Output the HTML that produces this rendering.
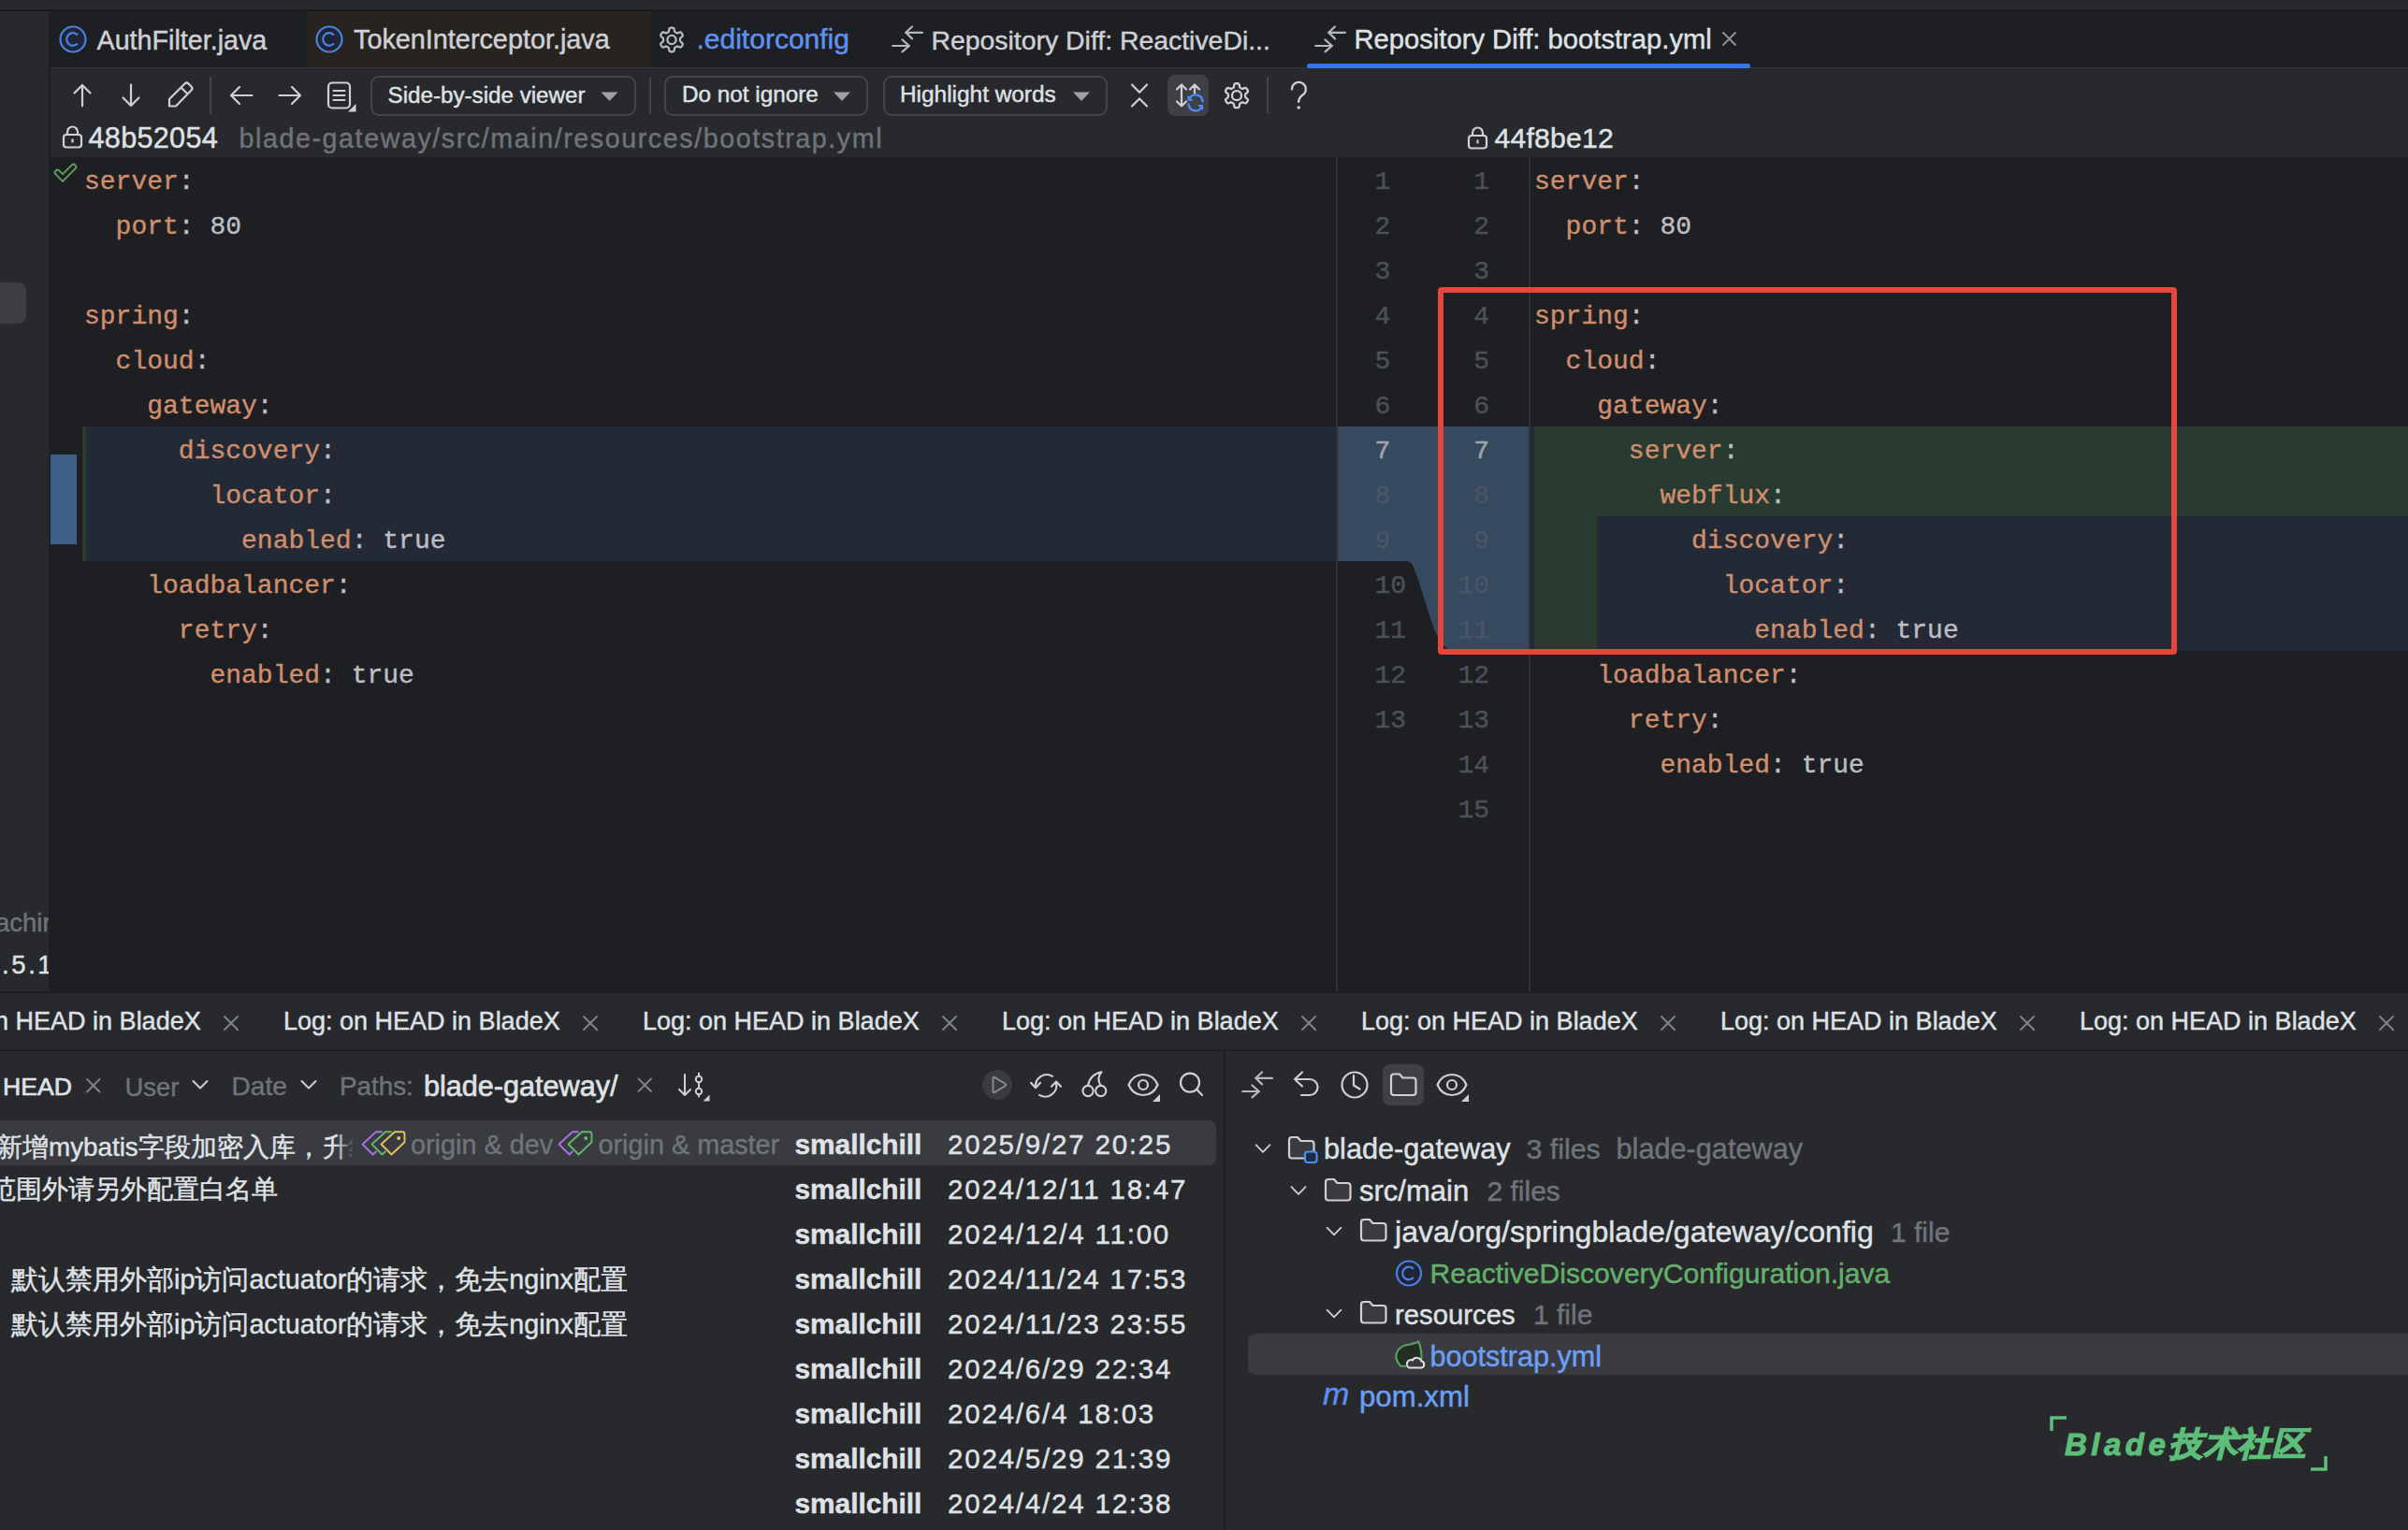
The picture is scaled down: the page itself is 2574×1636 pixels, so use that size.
<!DOCTYPE html><html><head><meta charset="utf-8"><title>diff</title><style>

:root{--s:"Liberation Sans",sans-serif;--m:"Liberation Mono",monospace;}
html,body{margin:0;padding:0;}
body{width:2574px;height:1636px;overflow:hidden;position:relative;background:#1e1f22;}
.bg div, .ov div{position:absolute;box-sizing:border-box;}
.t{position:absolute;white-space:pre;line-height:1;-webkit-text-stroke:0.45px currentColor;}
.t span{-webkit-text-stroke:0.4px currentColor;}
svg{position:absolute;left:0;top:0;}

</style></head><body>
<div class="bg"><div style="left:0px;top:0px;width:2574px;height:10px;background:#28292c;"></div><div style="left:0px;top:10px;width:2574px;height:2px;background:#1a1b1e;"></div><div style="left:0px;top:12px;width:52px;height:1048px;background:#28292c;"></div><div style="left:-8px;top:302px;width:36px;height:44px;background:#3c3e44;border-radius:8px;"></div><div style="left:52px;top:12px;width:2522px;height:60px;background:#1e1f22;"></div><div style="left:328px;top:12px;width:368px;height:60px;background:#27231e;"></div><div style="left:54px;top:72px;width:2520px;height:1px;background:#35373b;"></div><div style="left:54px;top:73px;width:2520px;height:95px;background:#28292c;"></div><div style="left:1397px;top:68px;width:474px;height:5px;background:#3574f0;border-radius:3px;"></div><div style="left:1428px;top:168px;width:2px;height:893px;background:#2f3136;"></div><div style="left:1634px;top:168px;width:2px;height:893px;background:#2f3136;"></div><div style="left:88px;top:456px;width:4px;height:144px;background:#2a3b2f;"></div><div style="left:92px;top:456px;width:1336px;height:144px;background:#232935;"></div><div style="left:54px;top:486px;width:28px;height:96px;background:#3f5f86;"></div><div style="left:1636px;top:456px;width:4px;height:240px;background:#232935;"></div><div style="left:1640px;top:456px;width:934px;height:96px;background:#293a30;"></div><div style="left:1640px;top:552px;width:67px;height:144px;background:#293a30;"></div><div style="left:1707px;top:552px;width:867px;height:144px;background:#232935;"></div><div style="left:0px;top:1062px;width:2574px;height:574px;background:#28292c;"></div><div style="left:0px;top:1061px;width:2574px;height:1px;background:#1a1b1e;"></div><div style="left:0px;top:1122px;width:2574px;height:2px;background:#1e1f22;"></div><div style="left:1308px;top:1124px;width:2px;height:512px;background:#1e1f22;"></div><div style="left:-10px;top:1198px;width:1310px;height:48px;background:#393b40;border-radius:8px;"></div><div style="left:1334px;top:1426px;width:1300px;height:44px;background:#393b40;border-radius:8px;"></div><div style="left:224px;top:82px;width:2px;height:40px;background:#43454a;"></div><div style="left:694px;top:83px;width:2px;height:39px;background:#43454a;"></div><div style="left:1354px;top:82px;width:2px;height:39px;background:#43454a;"></div><div style="left:396px;top:80.5px;width:284px;height:43px;border:2px solid #43454a;border-radius:9px;"></div><div style="left:710px;top:80.5px;width:218px;height:43px;border:2px solid #43454a;border-radius:9px;"></div><div style="left:944px;top:80.5px;width:240px;height:43px;border:2px solid #43454a;border-radius:9px;"></div><div style="left:1248px;top:80px;width:44px;height:44px;background:#3e4045;border-radius:8px;"></div><div style="left:1478px;top:1138px;width:44px;height:44px;background:#3e4045;border-radius:8px;"></div></div>
<svg width="2574" height="1636" viewBox="0 0 2574 1636"><path d="M1430 456 H1634 V696 H1552 C1532 690 1525 640 1510 604 C1508 601 1506 600 1502 600 H1430 Z" fill="#35495f"/></svg>
<div class="t" style="left:103.5px;top:28.50px;font-size:28.7px;color:#ced0d6;font-family:var(--s);">AuthFilter.java</div><div class="t" style="left:378.0px;top:28.42px;font-size:28.8px;color:#ced0d6;font-family:var(--s);">TokenInterceptor.java</div><div class="t" style="left:744.5px;top:27.40px;font-size:30.0px;color:#5e92f2;font-family:var(--s);">.editorconfig</div><div class="t" style="left:995.5px;top:28.75px;font-size:28.4px;color:#ced0d6;font-family:var(--s);">Repository Diff: ReactiveDi...</div><div class="t" style="left:1447.5px;top:28.08px;font-size:29.2px;color:#dfe1e5;font-family:var(--s);">Repository Diff: bootstrap.yml</div><div class="t" style="left:414.5px;top:89.51px;font-size:24.2px;color:#dfe1e5;font-family:var(--s);">Side-by-side viewer</div><div class="t" style="left:729.0px;top:89.43px;font-size:24.3px;color:#dfe1e5;font-family:var(--s);">Do not ignore</div><div class="t" style="left:962.0px;top:89.34px;font-size:24.4px;color:#dfe1e5;font-family:var(--s);">Highlight words</div><div class="t" style="left:94.5px;top:131.89px;font-size:30.6px;color:#dfe1e5;font-family:var(--s);letter-spacing:0.3px;">48b52054</div><div class="t" style="left:255.5px;top:133.78px;font-size:28.6px;color:#6f737a;font-family:var(--s);letter-spacing:1.6px;">blade-gateway/src/main/resources/bootstrap.yml</div><div class="t" style="left:1597.5px;top:132.93px;font-size:30.2px;color:#dfe1e5;font-family:var(--s);letter-spacing:0.2px;">44f8be12</div><div class="t" style="left:90.0px;top:180.55px;font-size:28px;font-family:var(--m);"><span style="color:#bcbec4"></span><span style="color:#cf8e6d">server</span><span style="color:#bcbec4">:</span></div><div class="t" style="left:90.0px;top:228.55px;font-size:28px;font-family:var(--m);"><span style="color:#bcbec4">  </span><span style="color:#cf8e6d">port</span><span style="color:#bcbec4">:</span><span style="color:#bcbec4"> 80</span></div><div class="t" style="left:90.0px;top:324.55px;font-size:28px;font-family:var(--m);"><span style="color:#bcbec4"></span><span style="color:#cf8e6d">spring</span><span style="color:#bcbec4">:</span></div><div class="t" style="left:90.0px;top:372.55px;font-size:28px;font-family:var(--m);"><span style="color:#bcbec4">  </span><span style="color:#cf8e6d">cloud</span><span style="color:#bcbec4">:</span></div><div class="t" style="left:90.0px;top:420.55px;font-size:28px;font-family:var(--m);"><span style="color:#bcbec4">    </span><span style="color:#cf8e6d">gateway</span><span style="color:#bcbec4">:</span></div><div class="t" style="left:90.0px;top:468.55px;font-size:28px;font-family:var(--m);"><span style="color:#bcbec4">      </span><span style="color:#cf8e6d">discovery</span><span style="color:#bcbec4">:</span></div><div class="t" style="left:90.0px;top:516.55px;font-size:28px;font-family:var(--m);"><span style="color:#bcbec4">        </span><span style="color:#cf8e6d">locator</span><span style="color:#bcbec4">:</span></div><div class="t" style="left:90.0px;top:564.55px;font-size:28px;font-family:var(--m);"><span style="color:#bcbec4">          </span><span style="color:#cf8e6d">enabled</span><span style="color:#bcbec4">:</span><span style="color:#bcbec4"> true</span></div><div class="t" style="left:90.0px;top:612.55px;font-size:28px;font-family:var(--m);"><span style="color:#bcbec4">    </span><span style="color:#cf8e6d">loadbalancer</span><span style="color:#bcbec4">:</span></div><div class="t" style="left:90.0px;top:660.55px;font-size:28px;font-family:var(--m);"><span style="color:#bcbec4">      </span><span style="color:#cf8e6d">retry</span><span style="color:#bcbec4">:</span></div><div class="t" style="left:90.0px;top:708.55px;font-size:28px;font-family:var(--m);"><span style="color:#bcbec4">        </span><span style="color:#cf8e6d">enabled</span><span style="color:#bcbec4">:</span><span style="color:#bcbec4"> true</span></div><div class="t" style="left:1640.0px;top:180.55px;font-size:28px;font-family:var(--m);"><span style="color:#bcbec4"></span><span style="color:#cf8e6d">server</span><span style="color:#bcbec4">:</span></div><div class="t" style="left:1640.0px;top:228.55px;font-size:28px;font-family:var(--m);"><span style="color:#bcbec4">  </span><span style="color:#cf8e6d">port</span><span style="color:#bcbec4">:</span><span style="color:#bcbec4"> 80</span></div><div class="t" style="left:1640.0px;top:324.55px;font-size:28px;font-family:var(--m);"><span style="color:#bcbec4"></span><span style="color:#cf8e6d">spring</span><span style="color:#bcbec4">:</span></div><div class="t" style="left:1640.0px;top:372.55px;font-size:28px;font-family:var(--m);"><span style="color:#bcbec4">  </span><span style="color:#cf8e6d">cloud</span><span style="color:#bcbec4">:</span></div><div class="t" style="left:1640.0px;top:420.55px;font-size:28px;font-family:var(--m);"><span style="color:#bcbec4">    </span><span style="color:#cf8e6d">gateway</span><span style="color:#bcbec4">:</span></div><div class="t" style="left:1640.0px;top:468.55px;font-size:28px;font-family:var(--m);"><span style="color:#bcbec4">      </span><span style="color:#cf8e6d">server</span><span style="color:#bcbec4">:</span></div><div class="t" style="left:1640.0px;top:516.55px;font-size:28px;font-family:var(--m);"><span style="color:#bcbec4">        </span><span style="color:#cf8e6d">webflux</span><span style="color:#bcbec4">:</span></div><div class="t" style="left:1640.0px;top:564.55px;font-size:28px;font-family:var(--m);"><span style="color:#bcbec4">          </span><span style="color:#cf8e6d">discovery</span><span style="color:#bcbec4">:</span></div><div class="t" style="left:1640.0px;top:612.55px;font-size:28px;font-family:var(--m);"><span style="color:#bcbec4">            </span><span style="color:#cf8e6d">locator</span><span style="color:#bcbec4">:</span></div><div class="t" style="left:1640.0px;top:660.55px;font-size:28px;font-family:var(--m);"><span style="color:#bcbec4">              </span><span style="color:#cf8e6d">enabled</span><span style="color:#bcbec4">:</span><span style="color:#bcbec4"> true</span></div><div class="t" style="left:1640.0px;top:708.55px;font-size:28px;font-family:var(--m);"><span style="color:#bcbec4">    </span><span style="color:#cf8e6d">loadbalancer</span><span style="color:#bcbec4">:</span></div><div class="t" style="left:1640.0px;top:756.55px;font-size:28px;font-family:var(--m);"><span style="color:#bcbec4">      </span><span style="color:#cf8e6d">retry</span><span style="color:#bcbec4">:</span></div><div class="t" style="left:1640.0px;top:804.55px;font-size:28px;font-family:var(--m);"><span style="color:#bcbec4">        </span><span style="color:#cf8e6d">enabled</span><span style="color:#bcbec4">:</span><span style="color:#bcbec4"> true</span></div><div class="t" style="left:1469.5px;top:180.55px;font-size:28px;color:#4b5059;font-family:var(--m);">1</div><div class="t" style="left:1469.5px;top:228.55px;font-size:28px;color:#4b5059;font-family:var(--m);">2</div><div class="t" style="left:1469.5px;top:276.55px;font-size:28px;color:#4b5059;font-family:var(--m);">3</div><div class="t" style="left:1469.5px;top:324.55px;font-size:28px;color:#4b5059;font-family:var(--m);">4</div><div class="t" style="left:1469.5px;top:372.55px;font-size:28px;color:#4b5059;font-family:var(--m);">5</div><div class="t" style="left:1469.5px;top:420.55px;font-size:28px;color:#4b5059;font-family:var(--m);">6</div><div class="t" style="left:1469.5px;top:468.55px;font-size:28px;color:#a1a3ab;font-family:var(--m);">7</div><div class="t" style="left:1469.5px;top:516.55px;font-size:28px;color:#4a5566;font-family:var(--m);">8</div><div class="t" style="left:1469.5px;top:564.55px;font-size:28px;color:#4a5566;font-family:var(--m);">9</div><div class="t" style="left:1469.5px;top:612.55px;font-size:28px;color:#4b5059;font-family:var(--m);">10</div><div class="t" style="left:1469.5px;top:660.55px;font-size:28px;color:#4b5059;font-family:var(--m);">11</div><div class="t" style="left:1469.5px;top:708.55px;font-size:28px;color:#4b5059;font-family:var(--m);">12</div><div class="t" style="left:1469.5px;top:756.55px;font-size:28px;color:#4b5059;font-family:var(--m);">13</div><div class="t" style="right:982.0px;top:180.55px;font-size:28px;color:#4b5059;font-family:var(--m);">1</div><div class="t" style="right:982.0px;top:228.55px;font-size:28px;color:#4b5059;font-family:var(--m);">2</div><div class="t" style="right:982.0px;top:276.55px;font-size:28px;color:#4b5059;font-family:var(--m);">3</div><div class="t" style="right:982.0px;top:324.55px;font-size:28px;color:#4b5059;font-family:var(--m);">4</div><div class="t" style="right:982.0px;top:372.55px;font-size:28px;color:#4b5059;font-family:var(--m);">5</div><div class="t" style="right:982.0px;top:420.55px;font-size:28px;color:#4b5059;font-family:var(--m);">6</div><div class="t" style="right:982.0px;top:468.55px;font-size:28px;color:#a1a3ab;font-family:var(--m);">7</div><div class="t" style="right:982.0px;top:516.55px;font-size:28px;color:#4a5566;font-family:var(--m);">8</div><div class="t" style="right:982.0px;top:564.55px;font-size:28px;color:#4a5566;font-family:var(--m);">9</div><div class="t" style="right:982.0px;top:612.55px;font-size:28px;color:#4a5566;font-family:var(--m);">10</div><div class="t" style="right:982.0px;top:660.55px;font-size:28px;color:#4a5566;font-family:var(--m);">11</div><div class="t" style="right:982.0px;top:708.55px;font-size:28px;color:#4b5059;font-family:var(--m);">12</div><div class="t" style="right:982.0px;top:756.55px;font-size:28px;color:#4b5059;font-family:var(--m);">13</div><div class="t" style="right:982.0px;top:804.55px;font-size:28px;color:#4b5059;font-family:var(--m);">14</div><div class="t" style="right:982.0px;top:852.55px;font-size:28px;color:#4b5059;font-family:var(--m);">15</div><div class="t" style="left:0;top:960px;width:52px;height:95px;overflow:hidden"><div class="t" style="left:-5px;top:13.1px;font-size:27.5px;color:#6f737a;font-family:var(--s)">achir</div><div class="t" style="left:2px;top:57.6px;font-size:27.5px;color:#dfe1e5;font-family:var(--s);letter-spacing:2.6px">.5.1</div></div><div class="t" style="left:-81.0px;top:1079.14px;font-size:27.0px;color:#dfe1e5;font-family:var(--s);">Log: on HEAD in BladeX</div><div class="t" style="left:303.0px;top:1079.14px;font-size:27.0px;color:#dfe1e5;font-family:var(--s);">Log: on HEAD in BladeX</div><div class="t" style="left:687.0px;top:1079.14px;font-size:27.0px;color:#dfe1e5;font-family:var(--s);">Log: on HEAD in BladeX</div><div class="t" style="left:1071.0px;top:1079.14px;font-size:27.0px;color:#dfe1e5;font-family:var(--s);">Log: on HEAD in BladeX</div><div class="t" style="left:1455.0px;top:1079.14px;font-size:27.0px;color:#dfe1e5;font-family:var(--s);">Log: on HEAD in BladeX</div><div class="t" style="left:1839.0px;top:1079.14px;font-size:27.0px;color:#dfe1e5;font-family:var(--s);">Log: on HEAD in BladeX</div><div class="t" style="left:2223.0px;top:1079.14px;font-size:27.0px;color:#dfe1e5;font-family:var(--s);">Log: on HEAD in BladeX</div><div class="t" style="left:3.0px;top:1149.48px;font-size:26.6px;color:#dfe1e5;font-family:var(--s);-webkit-text-stroke:0.7px #dfe1e5;">HEAD</div><div class="t" style="left:133.5px;top:1148.80px;font-size:27.4px;color:#6f737a;font-family:var(--s);">User</div><div class="t" style="left:247.5px;top:1148.21px;font-size:28.1px;color:#6f737a;font-family:var(--s);">Date</div><div class="t" style="left:363.0px;top:1148.46px;font-size:27.8px;color:#6f737a;font-family:var(--s);">Paths:</div><div class="t" style="left:453.0px;top:1146.09px;font-size:30.6px;color:#dfe1e5;font-family:var(--s);-webkit-text-stroke:0.7px #dfe1e5;">blade-gateway/</div><div class="t" style="left:849.5px;top:1208.77px;font-size:29.8px;color:#dfe1e5;font-family:var(--s);font-weight:700;">smallchill</div><div class="t" style="left:1013.0px;top:1209.02px;font-size:29.5px;color:#dfe1e5;font-family:var(--s);letter-spacing:1.8px;">2025/9/27 20:25</div><div class="t" style="left:849.5px;top:1256.77px;font-size:29.8px;color:#dfe1e5;font-family:var(--s);font-weight:700;">smallchill</div><div class="t" style="left:1013.0px;top:1257.02px;font-size:29.5px;color:#dfe1e5;font-family:var(--s);letter-spacing:1.8px;">2024/12/11 18:47</div><div class="t" style="left:849.5px;top:1304.77px;font-size:29.8px;color:#dfe1e5;font-family:var(--s);font-weight:700;">smallchill</div><div class="t" style="left:1013.0px;top:1305.02px;font-size:29.5px;color:#dfe1e5;font-family:var(--s);letter-spacing:1.8px;">2024/12/4 11:00</div><div class="t" style="left:849.5px;top:1352.77px;font-size:29.8px;color:#dfe1e5;font-family:var(--s);font-weight:700;">smallchill</div><div class="t" style="left:1013.0px;top:1353.02px;font-size:29.5px;color:#dfe1e5;font-family:var(--s);letter-spacing:1.8px;">2024/11/24 17:53</div><div class="t" style="left:849.5px;top:1400.77px;font-size:29.8px;color:#dfe1e5;font-family:var(--s);font-weight:700;">smallchill</div><div class="t" style="left:1013.0px;top:1401.02px;font-size:29.5px;color:#dfe1e5;font-family:var(--s);letter-spacing:1.8px;">2024/11/23 23:55</div><div class="t" style="left:849.5px;top:1448.77px;font-size:29.8px;color:#dfe1e5;font-family:var(--s);font-weight:700;">smallchill</div><div class="t" style="left:1013.0px;top:1449.02px;font-size:29.5px;color:#dfe1e5;font-family:var(--s);letter-spacing:1.8px;">2024/6/29 22:34</div><div class="t" style="left:849.5px;top:1496.77px;font-size:29.8px;color:#dfe1e5;font-family:var(--s);font-weight:700;">smallchill</div><div class="t" style="left:1013.0px;top:1497.02px;font-size:29.5px;color:#dfe1e5;font-family:var(--s);letter-spacing:1.8px;">2024/6/4 18:03</div><div class="t" style="left:849.5px;top:1544.77px;font-size:29.8px;color:#dfe1e5;font-family:var(--s);font-weight:700;">smallchill</div><div class="t" style="left:1013.0px;top:1545.02px;font-size:29.5px;color:#dfe1e5;font-family:var(--s);letter-spacing:1.8px;">2024/5/29 21:39</div><div class="t" style="left:849.5px;top:1592.77px;font-size:29.8px;color:#dfe1e5;font-family:var(--s);font-weight:700;">smallchill</div><div class="t" style="left:1013.0px;top:1593.02px;font-size:29.5px;color:#dfe1e5;font-family:var(--s);letter-spacing:1.8px;">2024/4/24 12:38</div><div class="t" style="left:0px;top:1200px;width:377px;height:44px;overflow:hidden;"><div class="t" style="left:-4px;top:13.3px;font-size:27.8px;color:#dfe1e5;font-family:var(--s)">新增mybatis字段加密入库，</div><div class="t" style="left:345px;top:13.3px;font-size:27.8px;color:#dfe1e5;font-family:var(--s)">升级</div></div><div style="position:absolute;left:358px;top:1198px;width:20px;height:48px;background:linear-gradient(90deg, rgba(57,59,64,0) 0%, rgba(57,59,64,0.7) 75%, #393b40 100%)"></div><div class="t" style="left:-11.0px;top:1258.46px;font-size:27.8px;color:#dfe1e5;font-family:var(--s);">范围外请另外配置白名单</div><div class="t" style="left:12.0px;top:1353.66px;font-size:28.75px;color:#dfe1e5;font-family:var(--s);">默认禁用外部ip访问actuator的请求，免去nginx配置</div><div class="t" style="left:12.0px;top:1401.66px;font-size:28.75px;color:#dfe1e5;font-family:var(--s);">默认禁用外部ip访问actuator的请求，免去nginx配置</div><div class="t" style="left:439.0px;top:1209.62px;font-size:28.8px;color:#6f737a;font-family:var(--s);">origin &amp; dev</div><div class="t" style="left:639.5px;top:1209.62px;font-size:28.8px;color:#6f737a;font-family:var(--s);">origin &amp; master</div><div class="t" style="left:1415.0px;top:1214.01px;font-size:30.7px;color:#dfe1e5;font-family:var(--s);">blade-gateway</div><div class="t" style="left:1631.5px;top:1214.34px;font-size:30.3px;color:#6f737a;font-family:var(--s);">3 files</div><div class="t" style="left:1727.5px;top:1214.01px;font-size:30.7px;color:#6f737a;font-family:var(--s);">blade-gateway</div><div class="t" style="left:1453.0px;top:1258.25px;font-size:31.0px;color:#dfe1e5;font-family:var(--s);">src/main</div><div class="t" style="left:1589.5px;top:1259.10px;font-size:30.0px;color:#6f737a;font-family:var(--s);">2 files</div><div class="t" style="left:1491.0px;top:1300.82px;font-size:32.1px;color:#dfe1e5;font-family:var(--s);">java/org/springblade/gateway/config</div><div class="t" style="left:2021.0px;top:1302.60px;font-size:30.0px;color:#6f737a;font-family:var(--s);">1 file</div><div class="t" style="left:1528.5px;top:1347.01px;font-size:30.1px;color:#64b06a;font-family:var(--s);">ReactiveDiscoveryConfiguration.java</div><div class="t" style="left:1491.0px;top:1391.19px;font-size:29.3px;color:#dfe1e5;font-family:var(--s);">resources</div><div class="t" style="left:1639.0px;top:1390.60px;font-size:30.0px;color:#6f737a;font-family:var(--s);">1 file</div><div class="t" style="left:1528.5px;top:1434.59px;font-size:30.6px;color:#6b9ff5;font-family:var(--s);">bootstrap.yml</div><div class="t" style="left:1414.0px;top:1473.21px;font-size:34px;color:#5a8ef0;font-family:var(--s);font-style:italic;">m</div><div class="t" style="left:1453.0px;top:1477.58px;font-size:31.2px;color:#6b9ff5;font-family:var(--s);">pom.xml</div><div class="t" style="left:2207px;top:1524px;font-size:33px;line-height:40px;color:#5dbe7a;font-family:var(--s);font-weight:700;font-style:italic;"><span style="letter-spacing:4.5px;-webkit-text-stroke:1px #5dbe7a">Blade</span><span style="font-size:35.5px;-webkit-text-stroke:1.6px #5dbe7a;letter-spacing:0.5px">技术社区</span></div>
<svg width="2574" height="1636" viewBox="0 0 2574 1636"><circle cx="78" cy="42" r="13.5" fill="#1f2536" stroke="#4a80e0" stroke-width="2.2"/><path d="M83 37.4 A6.8 6.8 0 1 0 83 46.6" fill="none" stroke="#4a80e0" stroke-width="2.2"/><circle cx="352" cy="42" r="13.5" fill="#1f2536" stroke="#4a80e0" stroke-width="2.2"/><path d="M357 37.4 A6.8 6.8 0 1 0 357 46.6" fill="none" stroke="#4a80e0" stroke-width="2.2"/><path d="M718.00 29.70 L718.84 29.74 L719.66 29.88 L720.41 30.38 L720.82 31.99 L721.02 33.59 L721.46 34.15 L721.97 34.45 L722.48 34.74 L722.98 35.04 L723.50 35.33 L724.20 35.43 L725.69 34.81 L727.29 34.35 L728.10 34.75 L728.63 35.39 L729.09 36.10 L729.47 36.84 L729.76 37.63 L729.70 38.53 L728.51 39.68 L727.22 40.67 L726.96 41.32 L726.95 41.91 L726.96 42.50 L726.95 43.09 L726.96 43.68 L727.22 44.33 L728.51 45.32 L729.70 46.47 L729.76 47.37 L729.47 48.16 L729.09 48.90 L728.63 49.61 L728.10 50.25 L727.29 50.65 L725.69 50.19 L724.20 49.57 L723.50 49.67 L722.98 49.96 L722.48 50.26 L721.97 50.55 L721.46 50.85 L721.02 51.41 L720.82 53.01 L720.41 54.62 L719.66 55.12 L718.84 55.26 L718.00 55.30 L717.16 55.26 L716.34 55.12 L715.59 54.62 L715.18 53.01 L714.98 51.41 L714.54 50.85 L714.03 50.55 L713.52 50.26 L713.02 49.96 L712.50 49.67 L711.80 49.57 L710.31 50.19 L708.71 50.65 L707.90 50.25 L707.37 49.61 L706.91 48.90 L706.53 48.16 L706.24 47.37 L706.30 46.47 L707.49 45.32 L708.78 44.33 L709.04 43.68 L709.05 43.09 L709.04 42.50 L709.05 41.91 L709.04 41.32 L708.78 40.67 L707.49 39.68 L706.30 38.53 L706.24 37.63 L706.53 36.84 L706.91 36.10 L707.37 35.39 L707.90 34.75 L708.71 34.35 L710.31 34.81 L711.80 35.43 L712.50 35.33 L713.02 35.04 L713.52 34.74 L714.03 34.45 L714.54 34.15 L714.98 33.59 L715.18 31.99 L715.59 30.38 L716.34 29.88 L717.16 29.74 Z" fill="none" stroke="#b4b8bf" stroke-width="2.3" stroke-linejoin="round"/><circle cx="718" cy="42.5" r="4.6" fill="none" stroke="#b4b8bf" stroke-width="2.3"/><g fill="none" stroke="#b4b8bf" stroke-width="2.2" stroke-linecap="round" stroke-linejoin="round"><path d="M968.3 34.8 H986"/><path d="M975 28.5 L968.3 34.8 L975 41.4"/><path d="M954.2 49 H971.8"/><path d="M964.5 42.5 L971.8 49 L964.5 55.3"/></g><g fill="none" stroke="#b4b8bf" stroke-width="2.2" stroke-linecap="round" stroke-linejoin="round"><path d="M1420.3 34.8 H1438"/><path d="M1427 28.5 L1420.3 34.8 L1427 41.4"/><path d="M1406.2 49 H1423.8"/><path d="M1416.5 42.5 L1423.8 49 L1416.5 55.3"/></g><path d="M1842 35 L1855 48 M1855 35 L1842 48" stroke="#8c8f94" stroke-width="2" stroke-linecap="round"/><g fill="none" stroke="#ced0d6" stroke-width="2.2" stroke-linecap="round" stroke-linejoin="round"><path d="M88 91 V113.5 M79.5 99.5 L88 91 L96.5 99.5"/><path d="M140 90.5 V113 M131.5 104.5 L140 113 L148.5 104.5"/><path d="M181 113.5 V106 L197.5 89.5 Q199.5 87.5 201.5 89.5 L204.5 92.5 Q206.5 94.5 204.5 96.5 L188 113.5 Z M193.5 93.5 L200.5 100.5"/><path d="M247 102 H269.5 M256 93 L247 102 L256 111"/><path d="M298.5 102 H321 M312 93 L321 102 L312 111"/><rect x="351" y="88.5" width="23" height="27" rx="4"/><path d="M356.5 97 H368.5 M356.5 102 H368.5 M356.5 107 H368.5"/><path d="M1210 90.5 L1218 98.7 L1226 90.5 M1210 113.5 L1218 105.5 L1226 113.5"/></g><path d="M372 119.5 H380.5 V111 Z" fill="#ced0d6"/><path d="M642.5 98.5 H660.5 L651.5 108 Z" fill="#9da0a8"/><path d="M891 98.5 H909 L900 108 Z" fill="#9da0a8"/><path d="M1147 98.5 H1165 L1156 108 Z" fill="#9da0a8"/><g fill="none" stroke="#ced0d6" stroke-width="2.2" stroke-linecap="round" stroke-linejoin="round"><path d="M1263 90.5 V113.5 M1258 95.5 L1263 90.5 L1268 95.5 M1258 108.5 L1263 113.5 L1268 108.5"/><path d="M1277 90.5 V99.5 M1272 95.5 L1277 90.5 L1282 95.5"/></g><g fill="none" stroke="#4a8df8" stroke-width="2.4" stroke-linecap="round"><path d="M1271.5 105.5 A7.4 7.4 0 0 1 1285.5 108.5"/><path d="M1284.5 114.5 A7.4 7.4 0 0 1 1270.6 111.5"/></g><path d="M1269.5 101.5 V107.8 H1275.6 Z M1286 118.3 V112 H1279.8 Z" fill="#4a8df8"/><path d="M1322.00 89.20 L1322.85 89.24 L1323.69 89.39 L1324.45 89.89 L1324.86 91.53 L1325.07 93.15 L1325.51 93.72 L1326.03 94.03 L1326.55 94.32 L1327.06 94.62 L1327.59 94.92 L1328.30 95.02 L1329.81 94.39 L1331.43 93.93 L1332.25 94.33 L1332.80 94.98 L1333.26 95.70 L1333.65 96.45 L1333.94 97.25 L1333.88 98.17 L1332.67 99.34 L1331.37 100.34 L1331.10 101.00 L1331.09 101.60 L1331.10 102.20 L1331.09 102.80 L1331.10 103.40 L1331.37 104.06 L1332.67 105.06 L1333.88 106.23 L1333.94 107.15 L1333.65 107.95 L1333.26 108.70 L1332.80 109.42 L1332.25 110.07 L1331.43 110.47 L1329.81 110.01 L1328.30 109.38 L1327.59 109.48 L1327.06 109.78 L1326.55 110.08 L1326.03 110.37 L1325.51 110.68 L1325.07 111.25 L1324.86 112.87 L1324.45 114.51 L1323.69 115.01 L1322.85 115.16 L1322.00 115.20 L1321.15 115.16 L1320.31 115.01 L1319.55 114.51 L1319.14 112.87 L1318.93 111.25 L1318.49 110.68 L1317.97 110.37 L1317.45 110.08 L1316.94 109.78 L1316.41 109.48 L1315.70 109.38 L1314.19 110.01 L1312.57 110.47 L1311.75 110.07 L1311.20 109.42 L1310.74 108.70 L1310.35 107.95 L1310.06 107.15 L1310.12 106.23 L1311.33 105.06 L1312.63 104.06 L1312.90 103.40 L1312.91 102.80 L1312.90 102.20 L1312.91 101.60 L1312.90 101.00 L1312.63 100.34 L1311.33 99.34 L1310.12 98.17 L1310.06 97.25 L1310.35 96.45 L1310.74 95.70 L1311.20 94.98 L1311.75 94.33 L1312.57 93.93 L1314.19 94.39 L1315.70 95.02 L1316.41 94.92 L1316.94 94.62 L1317.45 94.32 L1317.97 94.03 L1318.49 93.72 L1318.93 93.15 L1319.14 91.53 L1319.55 89.89 L1320.31 89.39 L1321.15 89.24 Z" fill="none" stroke="#ced0d6" stroke-width="2.3" stroke-linejoin="round"/><circle cx="1322" cy="102.2" r="5" fill="none" stroke="#ced0d6" stroke-width="2.3"/><g fill="none" stroke="#ced0d6" stroke-width="2.3" stroke-linecap="round"><path d="M1381 95.5 A7.4 7.4 0 1 1 1392.5 101.5 Q1388.2 104.5 1388.2 109"/></g><circle cx="1388.2" cy="115" r="1.8" fill="#ced0d6"/><g fill="none" stroke="#ced0d6" stroke-width="2.2"><rect x="68" y="144" width="19" height="13.5" rx="3"/><path d="M72 144 V141 A5.5 5.5 0 0 1 83 141 V144"/><path d="M77.5 148.5 V152.5"/></g><g fill="none" stroke="#ced0d6" stroke-width="2.2"><rect x="1570" y="145" width="19" height="13.5" rx="3"/><path d="M1574 145 V142 A5.5 5.5 0 0 1 1585 142 V145"/><path d="M1579.5 149.5 V153.5"/></g><path d="M61.5 184.5 L67 190 L78.5 178.5" fill="none" stroke="#5b9a5e" stroke-width="7.4" stroke-linecap="round" stroke-linejoin="miter"/><path d="M61.5 184.5 L67 190 L78.5 178.5" fill="none" stroke="#1e1f22" stroke-width="3.4" stroke-linecap="round" stroke-linejoin="miter"/><path d="M240 1087 L254 1101 M254 1087 L240 1101" stroke="#7e8187" stroke-width="2" stroke-linecap="round"/><path d="M624 1087 L638 1101 M638 1087 L624 1101" stroke="#7e8187" stroke-width="2" stroke-linecap="round"/><path d="M1008 1087 L1022 1101 M1022 1087 L1008 1101" stroke="#7e8187" stroke-width="2" stroke-linecap="round"/><path d="M1392 1087 L1406 1101 M1406 1087 L1392 1101" stroke="#7e8187" stroke-width="2" stroke-linecap="round"/><path d="M1776 1087 L1790 1101 M1790 1087 L1776 1101" stroke="#7e8187" stroke-width="2" stroke-linecap="round"/><path d="M2160 1087 L2174 1101 M2174 1087 L2160 1101" stroke="#7e8187" stroke-width="2" stroke-linecap="round"/><path d="M2544 1087 L2558 1101 M2558 1087 L2544 1101" stroke="#7e8187" stroke-width="2" stroke-linecap="round"/><path d="M93 1154 L106.5 1167.5 M106.5 1154 L93 1167.5" stroke="#7e8187" stroke-width="2" stroke-linecap="round"/><path d="M206.5 1156 L214 1163.5 L221.5 1156" fill="none" stroke="#ced0d6" stroke-width="2" stroke-linecap="round" stroke-linejoin="round"/><path d="M322.5 1156 L330 1163.5 L337.5 1156" fill="none" stroke="#ced0d6" stroke-width="2" stroke-linecap="round" stroke-linejoin="round"/><path d="M682.5 1153.5 L696 1167 M696 1153.5 L682.5 1167" stroke="#7e8187" stroke-width="2" stroke-linecap="round"/><g fill="none" stroke="#ced0d6" stroke-width="2" stroke-linecap="round" stroke-linejoin="round"><path d="M732 1149 V1171 M726 1165 L732 1171 L738 1165"/><circle cx="747" cy="1154" r="3.2"/><circle cx="747" cy="1167" r="3.2"/><path d="M747 1147.5 V1150.8 M747 1157.2 V1163.8 M747 1170.2 V1172.5"/></g><path d="M751.5 1177.5 H758.5 V1170.5 Z" fill="#ced0d6"/><circle cx="1066" cy="1160" r="16" fill="#393b40"/><path d="M1061.5 1152.5 Q1061.5 1151 1063 1151.8 L1074.5 1158.8 Q1076 1160 1074.5 1161.2 L1063 1168.2 Q1061.5 1169 1061.5 1167.5 Z" fill="none" stroke="#83868c" stroke-width="2" stroke-linejoin="round"/><g fill="none" stroke="#ced0d6" stroke-width="2.1" stroke-linecap="round" stroke-linejoin="round"><path d="M1125 1150.8 A12 12 0 0 0 1107 1162.5"/><path d="M1102 1157.8 L1107 1163.2 L1112 1157.8"/><path d="M1111 1170.8 A12 12 0 0 0 1129 1158"/><path d="M1124 1161.8 L1129 1156.6 L1134 1161.8"/></g><g fill="none" stroke="#ced0d6" stroke-width="2.1" stroke-linecap="round" stroke-linejoin="round"><circle cx="1163" cy="1166.5" r="5.6"/><circle cx="1176.7" cy="1166.5" r="5.6"/><path d="M1163 1160.9 Q1165 1149 1177.5 1146.3 Q1171.5 1153 1176.7 1160.9"/></g><g fill="none" stroke="#ced0d6" stroke-width="2.2"><path d="M1206.5 1160 C1210 1152 1216 1149 1222 1149 C1228 1149 1234 1152 1237.5 1160 C1234 1168 1228 1171 1222 1171 C1216 1171 1210 1168 1206.5 1160 Z"/><circle cx="1222" cy="1160" r="5"/></g><path d="M1232 1178 H1240 V1170 Z" fill="#ced0d6"/><g fill="none" stroke="#ced0d6" stroke-width="2.2" stroke-linecap="round"><circle cx="1272" cy="1157.6" r="10"/><path d="M1279.2 1164.8 L1285 1171"/></g><path d="M408.00 1210.30 L402.00 1210.30 L387.50 1223.50 L398.50 1234.50 L401.80 1231.50" fill="none" stroke="#a571e6" stroke-width="1.9" stroke-linejoin="round" stroke-linecap="round"/><path d="M418.00 1210.30 L412.00 1210.30 L397.50 1223.50 L408.50 1234.50 L411.80 1231.50" fill="none" stroke="#5fb865" stroke-width="1.9" stroke-linejoin="round" stroke-linecap="round"/><path d="M407.50 1223.50 L422.00 1210.30 L430.00 1210.30 Q432.50 1210.30 432.50 1212.80 L432.50 1221.30 L418.50 1234.50 Z" fill="none" stroke="#e5c15a" stroke-width="1.9" stroke-linejoin="round"/><circle cx="426.20" cy="1216.90" r="2" fill="#e5c15a"/><path d="M618.00 1210.30 L612.00 1210.30 L597.50 1223.50 L608.50 1234.50 L611.80 1231.50" fill="none" stroke="#a571e6" stroke-width="1.9" stroke-linejoin="round" stroke-linecap="round"/><path d="M607.50 1223.50 L622.00 1210.30 L630.00 1210.30 Q632.50 1210.30 632.50 1212.80 L632.50 1221.30 L618.50 1234.50 Z" fill="none" stroke="#5fb865" stroke-width="1.9" stroke-linejoin="round"/><circle cx="626.20" cy="1216.90" r="2" fill="#5fb865"/><g fill="none" stroke="#b4b8bf" stroke-width="2.2" stroke-linecap="round" stroke-linejoin="round"><path d="M1342.3 1152.8 H1360"/><path d="M1349 1146.5 L1342.3 1152.8 L1349 1159.4"/><path d="M1328.2 1167 H1345.8"/><path d="M1338.5 1160.5 L1345.8 1167 L1338.5 1173.3"/></g><g fill="none" stroke="#ced0d6" stroke-width="2.2" stroke-linecap="round" stroke-linejoin="round"><path d="M1392 1146.5 L1384 1154 L1392 1161.5 M1384.5 1154 H1400 A8.5 8.5 0 0 1 1400 1171 H1391"/><circle cx="1448" cy="1160" r="13.5"/><path d="M1447 1150 V1160.5 L1453.5 1164.5"/></g><path d="M1487 1151.5 Q1487 1148.5 1490 1148.5 H1496 L1499.5 1152.5 H1510.5 Q1513.5 1152.5 1513.5 1155.5 V1168.0 Q1513.5 1171.0 1510.5 1171.0 H1490 Q1487 1171.0 1487 1168.0 Z" fill="#393b40" stroke="#ced0d6" stroke-width="2.2" stroke-linejoin="round"/><g fill="none" stroke="#ced0d6" stroke-width="2.2"><path d="M1536.5 1160 C1540 1152 1546 1149 1552 1149 C1558 1149 1564 1152 1567.5 1160 C1564 1168 1558 1171 1552 1171 C1546 1171 1540 1168 1536.5 1160 Z"/><circle cx="1552" cy="1160" r="5"/></g><path d="M1562 1178 H1570 V1170 Z" fill="#ced0d6"/><path d="M1342.5 1224.2 L1350 1231.8 L1357.5 1224.2" fill="none" stroke="#ced0d6" stroke-width="1.8" stroke-linecap="round" stroke-linejoin="round"/><path d="M1378 1219 Q1378 1216 1381 1216 H1387 L1390.5 1220 H1401.5 Q1404.5 1220 1404.5 1223 V1235.5 Q1404.5 1238.5 1401.5 1238.5 H1381 Q1378 1238.5 1378 1235.5 Z" fill="#393b40" stroke="#ced0d6" stroke-width="2.2" stroke-linejoin="round"/><rect x="1395" y="1231.5" width="12.5" height="11.5" rx="3" fill="#1f2a44" stroke="#4a8df8" stroke-width="2.2"/><path d="M1380.5 1269.2 L1388 1276.8 L1395.5 1269.2" fill="none" stroke="#ced0d6" stroke-width="1.8" stroke-linecap="round" stroke-linejoin="round"/><path d="M1417 1264 Q1417 1261 1420 1261 H1426 L1429.5 1265 H1440.5 Q1443.5 1265 1443.5 1268 V1280.5 Q1443.5 1283.5 1440.5 1283.5 H1420 Q1417 1283.5 1417 1280.5 Z" fill="#393b40" stroke="#ced0d6" stroke-width="2.2" stroke-linejoin="round"/><path d="M1418.5 1312.7 L1426 1320.3 L1433.5 1312.7" fill="none" stroke="#ced0d6" stroke-width="1.8" stroke-linecap="round" stroke-linejoin="round"/><path d="M1455 1307 Q1455 1304 1458 1304 H1464 L1467.5 1308 H1478.5 Q1481.5 1308 1481.5 1311 V1323.5 Q1481.5 1326.5 1478.5 1326.5 H1458 Q1455 1326.5 1455 1323.5 Z" fill="#393b40" stroke="#ced0d6" stroke-width="2.2" stroke-linejoin="round"/><circle cx="1506" cy="1361.5" r="13" fill="#1f2536" stroke="#4a80e0" stroke-width="2.2"/><path d="M1511 1356.9 A6.8 6.8 0 1 0 1511 1366.1" fill="none" stroke="#4a80e0" stroke-width="2.2"/><path d="M1418.5 1400.7 L1426 1408.3 L1433.5 1400.7" fill="none" stroke="#ced0d6" stroke-width="1.8" stroke-linecap="round" stroke-linejoin="round"/><path d="M1455 1395 Q1455 1392 1458 1392 H1464 L1467.5 1396 H1478.5 Q1481.5 1396 1481.5 1399 V1411.5 Q1481.5 1414.5 1478.5 1414.5 H1458 Q1455 1414.5 1455 1411.5 Z" fill="#393b40" stroke="#ced0d6" stroke-width="2.2" stroke-linejoin="round"/><path d="M1497.5 1461 Q1489 1452 1494 1444.5 Q1498 1438.5 1507 1437.5 Q1514 1436 1516.3 1434.5 Q1520 1444 1519.4 1453 L1504 1460.5 Z" fill="#232d24" stroke="#5b9a5e" stroke-width="2.2" stroke-linejoin="round"/><path d="M1506.5 1462.5 H1519.5 A3.6 3.6 0 0 0 1519.5 1455.5 A5.2 5.2 0 0 0 1510 1454.5 A4.2 4.2 0 0 0 1506.5 1462.5 Z" fill="#393b40" stroke="#dfe1e5" stroke-width="2" stroke-linejoin="round"/><path d="M2193 1530 V1516 H2209" fill="none" stroke="#5dbe7a" stroke-width="3.5"/><path d="M2470 1571 H2486 V1557" fill="none" stroke="#5dbe7a" stroke-width="3.5"/></svg>
<div class="ov"><div style="left:1537px;top:307px;width:790px;height:393px;border:6px solid #e5473d;border-radius:4px;"></div></div>
</body></html>
